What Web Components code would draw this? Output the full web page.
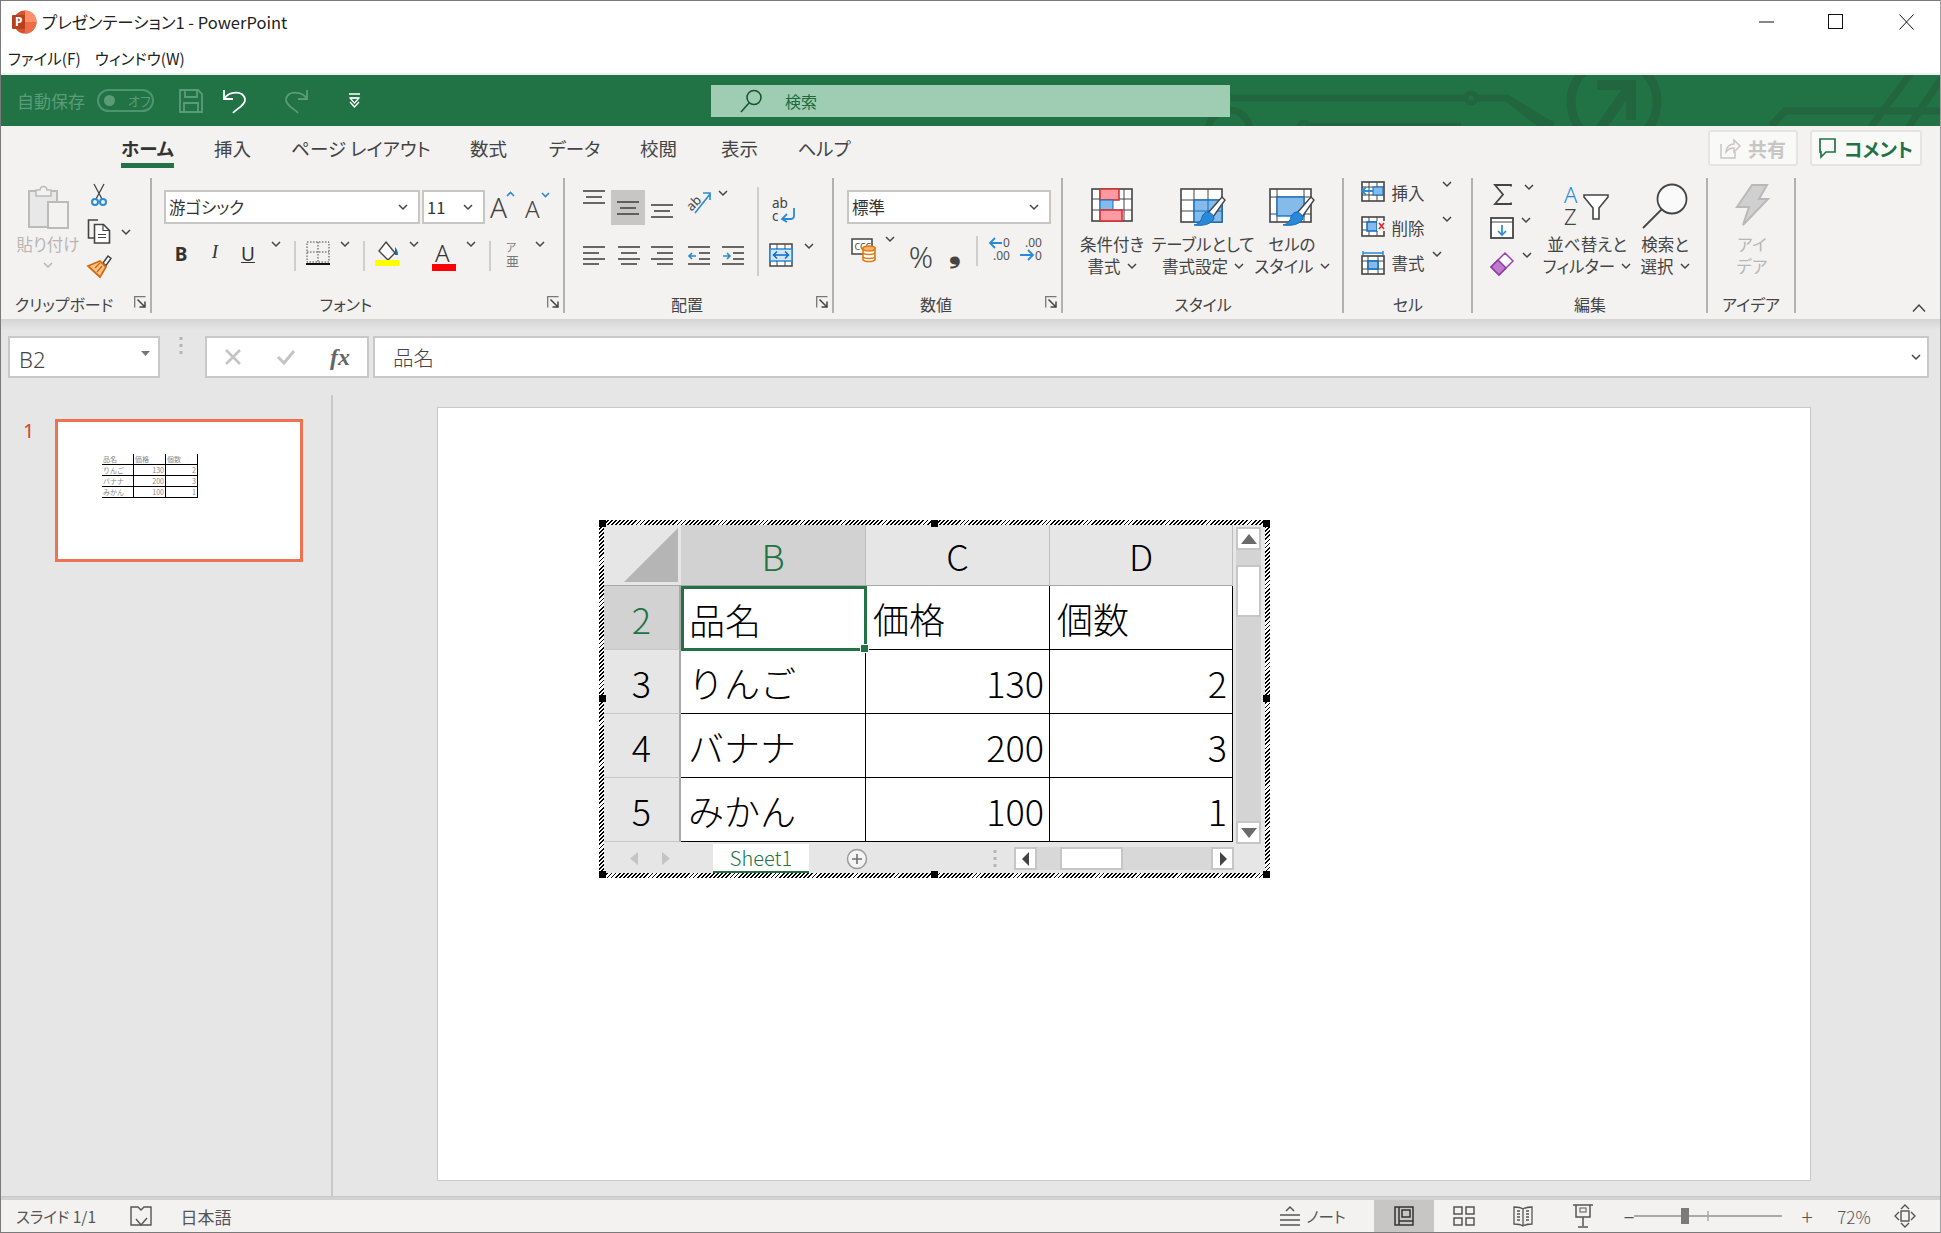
<!DOCTYPE html>
<html lang="ja"><head><meta charset="utf-8"><title>PowerPoint</title>
<style>
html,body{margin:0;padding:0;width:1941px;height:1233px;overflow:hidden;background:#e6e6e6}
</style></head>
<body>
<pp-app>
  <pp-titlebar>プレゼンテーション1 - PowerPoint</pp-titlebar>
  <pp-menubar><span>ファイル(F)</span><span>ウィンドウ(W)</span></pp-menubar>
  <pp-qat></pp-qat>
  <pp-ribbon></pp-ribbon>
  <pp-formula></pp-formula>
  <pp-main></pp-main>
  <pp-status></pp-status>
</pp-app>
<script>
const K='#444',BL='#2b8ad6',MB='#85bbea',DB='#0f6cbd',F='font-family="Noto Sans"';
const gridLines=(x0,y0,x1,y1,xs,ys,c=K)=>`<rect x="${x0}" y="${y0}" width="${x1-x0}" height="${y1-y0}" fill="#fff" stroke="${c}" stroke-width="1.6"/>`+xs.map(x=>`<path d="M${x} ${y0}V${y1}" stroke="${c}" stroke-width="1"/>`).join('')+ys.map(y=>`<path d="M${x0} ${y}H${x1}" stroke="${c}" stroke-width="1"/>`).join('');
const brush=`<path d="M42 9l3 3-12 17-5-4z" fill="#fff" stroke="#444" stroke-width="1.4"/><path d="M28 24c4 1 6 4 6 7-4 6-12 7-20 6 5-1 7-4 8-8 1-3 3-5 6-5z" fill="#2b88d8" stroke="#0f6cbd" stroke-width="1"/>`;
const lines=(arr,c=K)=>arr.map(([x,y,w])=>`<path d="M${x} ${y}h${w}" stroke="${c}" stroke-width="1.6"/>`).join('');
const ICONS={
 chev:[10,6,`<path d="M1 1l4 4 4-4" fill="none" stroke="#444" stroke-width="1.5"/>`],
 chevg:[10,6,`<path d="M1 1l4 4 4-4" fill="none" stroke="#b5b3b1" stroke-width="1.5"/>`],
 launch:[12,12,`<path d="M.7 11.5V.7H11.5" fill="none" stroke="#777" stroke-width="1.3"/><path d="M3.5 3.5l7.5 7.5M11 5.5V11H5.5" fill="none" stroke="#444" stroke-width="1.5"/>`],
 paste:[41,45,`<rect x="1" y="7" width="28" height="36" fill="#e8e8e8" stroke="#bdbbb9" stroke-width="2"/><path d="M8 12V6h4a3.5 3.5 0 0 1 7 0h4v6z" fill="#f3f2f1" stroke="#bdbbb9" stroke-width="1.6"/><rect x="20" y="18" width="20" height="26" fill="#f3f2f1" stroke="#bdbbb9" stroke-width="2"/>`],
 cut:[16,23,`<path d="M3 1l8 15M13 1L5 16" stroke="#444" stroke-width="1.3" fill="none"/><circle cx="4" cy="19" r="3" fill="none" stroke="${BL}" stroke-width="2"/><circle cx="12" cy="19" r="3" fill="none" stroke="${BL}" stroke-width="2"/>`],
 copy:[24,25,`<path d="M11 1H1.5V19H7" fill="none" stroke="#444" stroke-width="1.6"/><path d="M7.5 5.5h9l6 6v12.5h-15z" fill="#fff" stroke="#444" stroke-width="1.6"/><path d="M16 5.5v6h6.5M11 15.5h8M11 18.5h8" fill="none" stroke="#444" stroke-width="1.2"/>`],
 fmtp:[24,23,`<path d="M16 8l5-7 3 2.500-5 7z" fill="#fff" stroke="#444" stroke-width="1.5"/><path d="M1 11l12-5 6 6-6 10z" fill="#f9c48f" stroke="#d86a0c" stroke-width="1.8"/><path d="M8 13l5-5M10 17l5-6" stroke="#d86a0c" stroke-width="1.4"/>`],
 agrow:[24,30,`<text x="0" y="28" font-size="28" font-weight="300" fill="#444" ${F}>A</text><path d="M17 6l3.500-3.500L24 6" fill="none" stroke="${BL}" stroke-width="1.6"/>`],
 ashrink:[24,30,`<text x="0" y="28" font-size="24" font-weight="300" fill="#444" ${F}>A</text><path d="M17 3l3.500 3.500L24 3" fill="none" stroke="${BL}" stroke-width="1.6"/>`],
 border:[24,24,`<rect x="1" y="1" width="22" height="20" fill="none" stroke="#444" stroke-dasharray="1.5 1.5"/><path d="M12 1v20M1 11h22" stroke="#444" stroke-dasharray="1.5 1.5"/><path d="M0 23h24" stroke="#111" stroke-width="2"/>`],
 bucket:[25,25,`<path d="M10 1l9 11-7 7-9-9z" fill="#fff" stroke="#444" stroke-width="1.4" transform="translate(1 0)"/><path d="M20 6c2 2 3 5 3 8h-3z" fill="${DB}"/><rect y="19" width="24" height="6" fill="#ff0"/>`],
 fcolor:[25,30,`<text x="3" y="21" font-size="24" font-weight="300" fill="#333" ${F}>A</text><rect y="23" width="24" height="7" fill="#f00"/>`],
 phon:[15,26,`<text x="0" y="11" font-size="11" fill="#777" font-family="Noto Sans CJK JP">ア</text><text x="0" y="25" font-size="13" fill="#777" font-family="Noto Sans CJK JP">亜</text>`],
 at:[22,14,lines([[0,1,22],[3,7,16],[0,13,22]])],
 am:[22,14,lines([[0,1,22],[3,7,16],[0,13,22]])],
 ab:[22,14,lines([[0,1,22],[3,7,16],[0,13,22]])],
 al:[22,19,lines([[0,1,22],[0,7,16],[0,13,22],[0,18,16]].slice(0,4))],
 ac:[22,19,lines([[0,1,22],[3,7,16],[0,13,22],[3,18,16]])],
 ar:[22,19,lines([[0,1,22],[6,7,16],[0,13,22],[6,18,16]])],
 indl:[22,19,lines([[0,1,22],[11,7,11],[11,13,11],[0,18,22]])+`<path d="M8 10H1M4 7l-3 3 3 3" fill="none" stroke="${BL}" stroke-width="1.6"/>`],
 indr:[22,19,lines([[0,1,22],[11,7,11],[11,13,11],[0,18,22]])+`<path d="M1 10h7M5 7l3 3-3 3" fill="none" stroke="${BL}" stroke-width="1.6"/>`],
 orient:[26,24,`<text x="0" y="17" font-size="13" fill="#444" transform="rotate(-45 8 14)" ${F}>ab</text><path d="M8 23L23 4M16 3h7v7" fill="none" stroke="${BL}" stroke-width="1.6"/>`],
 wrap:[24,26,`<text x="0" y="12" font-size="13.500" fill="#444" ${F}>ab</text><text x="0" y="25" font-size="13.500" fill="#444" ${F}>c</text><path d="M22 12v8c0 2-2 3-3 3h-8M15 18l-5 5 5 3" fill="none" stroke="${BL}" stroke-width="1.8"/>`],
 merge:[24,24,`<rect x="1" y="1" width="22" height="22" fill="#fff" stroke="#444" stroke-width="1.5"/><rect x="1" y="6" width="22" height="12" fill="#d2e6f8" stroke="${BL}" stroke-width="1.5"/><path d="M4 12h16M8 8.500L4.500 12 8 15.500M16 8.500l3.500 3.500L16 15.500" fill="none" stroke="${DB}" stroke-width="1.5"/><path d="M8 1v5M16 1v5M8 18v5M16 18v5" stroke="#444"/>`],
 cur:[24,26,`<rect x="1" y="3" width="20" height="15" fill="#fff" stroke="#444" stroke-width="1.5"/><text x="3.500" y="14" font-size="9" fill="#444" ${F}>CCC</text><path d="M12 12h12v12c-2 2-10 2-12 0z" fill="#fff" stroke="#e07a10" stroke-width="1.600"/><ellipse cx="18" cy="12.500" rx="6" ry="2.500" fill="#f7b267" stroke="#e07a10" stroke-width="1.400"/><path d="M12 17c2 2 10 2 12 0M12 21c2 2 10 2 12 0" fill="none" stroke="#e07a10" stroke-width="1.400"/>`],
 incd:[24,26,`<path d="M14 7H2M7 2L2 7l5 5" fill="none" stroke="${BL}" stroke-width="1.800"/><text x="15" y="11" font-size="12" fill="#555" ${F}>0</text><text x="5" y="24" font-size="12" fill="#555" ${F}>.00</text>`],
 decd:[24,26,`<text x="5" y="11" font-size="12" fill="#555" ${F}>.00</text><path d="M0 19h13M8 14l5 5-5 5" fill="none" stroke="${BL}" stroke-width="1.800"/><text x="15" y="24" font-size="12" fill="#555" ${F}>0</text>`],
 cond:[42,34,gridLines(1,1,41,33,[9,21,33],[11,22])+`<rect x="9" y="1" width="19" height="11" fill="#ff9aa2" stroke="#d13438" stroke-width="1.600"/><rect x="9" y="12" width="13" height="10" fill="${MB}" stroke="${DB}" stroke-width="1"/><rect x="9" y="22" width="22" height="11" fill="#ff9aa2" stroke="#d13438" stroke-width="1.600"/>`],
 tbl:[46,38,gridLines(1,1,42,34,[14,28],[12,23])+`<rect x="14" y="12" width="28" height="22" fill="${MB}" stroke="${DB}" stroke-width="1.300"/><path d="M28 12v22M14 23h28" stroke="${DB}"/>`+brush],
 cst:[46,38,gridLines(1,1,42,34,[8,35],[9,26])+`<rect x="8" y="9" width="27" height="19" fill="${MB}" stroke="${DB}" stroke-width="1.300"/>`+brush],
 ins:[24,21,gridLines(1,1,23,20,[8,16],[6,14])+`<rect x="12" y="6" width="10" height="8" fill="${MB}" stroke="${DB}"/><path d="M12 10H1M5 6l-4 4 4 4" fill="none" stroke="${BL}" stroke-width="1.800"/>`],
 del:[24,21,gridLines(1,1,23,20,[8,16],[6,14])+`<rect x="6" y="6" width="10" height="9" fill="${MB}" stroke="${DB}" stroke-width="1.500"/><rect x="16" y="5" width="8" height="10" fill="#f3f2f1"/><path d="M18 7l5 6M23 7l-5 6" stroke="#e8262a" stroke-width="1.600"/>`],
 fmt:[24,24,gridLines(1,5,23,23,[7,17],[10,18])+`<rect x="7" y="10" width="10" height="8" fill="${MB}" stroke="${DB}" stroke-width="1.500"/><path d="M2 2h20M2 0v4M22 0v4" stroke="${BL}" stroke-width="1.500"/>`],
 sigma:[19,21,`<path d="M18 2.500V1H2l8 9.500L2 20h16v-1.500" fill="none" stroke="#444" stroke-width="1.800"/>`],
 fillb:[24,22,`<rect x="1" y="1" width="22" height="20" fill="#fff" stroke="#444" stroke-width="1.800"/><path d="M1 5h22" stroke="#444"/><path d="M12 8v10M8 14l4 4 4-4" fill="none" stroke="${BL}" stroke-width="1.700"/>`],
 eraser:[24,24,`<path d="M1 15L15 1l8 8L9 23z" fill="#fff" stroke="#a23fb5" stroke-width="1.500"/><path d="M1 15l7-7 8 8-7 7z" fill="#c07acb" stroke="#8e3aa6" stroke-width="1.500"/>`],
 sort:[46,42,`<text x="0" y="19" font-size="22" fill="${BL}" font-weight="300" ${F}>A</text><text x="0" y="41" font-size="22" fill="#444" font-weight="300" ${F}>Z</text><path d="M20 11h24v2L35 24v11h-6V24L20 13z" fill="#fff" stroke="#444" stroke-width="1.600"/>`],
 find:[46,46,`<circle cx="30" cy="16" r="14.500" fill="#fafafa" stroke="#444" stroke-width="1.800"/><path d="M20 26L1 45" stroke="#444" stroke-width="1.800"/>`],
 bolt:[34,42,`<path d="M17 1h15l-8 14h9L8 41l6-18H2z" fill="#d0d0d0" stroke="#b9b9b9" stroke-width="2"/>`],
 caret:[14,8,`<path d="M1 7.500L7 1l6 6.500" fill="none" stroke="#444" stroke-width="1.500"/>`],
 min:[15,2,`<path d="M0 1h15" stroke="#111" stroke-width="1"/>`],
 max:[15,15,`<rect x=".5" y=".5" width="14" height="14" fill="none" stroke="#111"/>`],
 close:[15,16,`<path d="M.5.5l14 15M14.500.5L.5 15.500" stroke="#111"/>`],
 logo:[25,24,`<circle cx="13" cy="12" r="11.500" fill="#d35230"/><path d="M13 .5a11.500 11.500 0 0 1 11.500 11.500H13z" fill="#ff8f6b"/><path d="M13 12h11.500A11.500 11.500 0 0 1 13 23.500z" fill="#ed6c47"/><rect y="5" width="13" height="14" rx="1" fill="#b7401f"/><text x="3" y="16" font-size="12" font-weight="700" fill="#fff" ${F}>P</text>`],
 save:[24,24,`<path d="M1 1h18l4 4v18H1z" fill="none" stroke="#5b9c78" stroke-width="1.800"/><path d="M6 1v7h12V1M5 23v-9h14v9" fill="none" stroke="#5b9c78" stroke-width="1.800"/>`],
 undo:[24,26,`<path d="M1 2v9h9M1 11C6 3 20 2 22 11c1 6-9 10-12 14" fill="none" stroke="#fff" stroke-width="1.800"/>`],
 redo:[24,26,`<path d="M23 2v9h-9M23 11C18 3 4 2 2 11c-1 6 9 10 12 14" fill="none" stroke="#5b9c78" stroke-width="1.800"/>`],
 cust:[11,15,`<path d="M0 1h11M1 5h9M1 9l4.500 5L10 9" fill="none" stroke="#fff" stroke-width="1.500"/><path d="M1 5h9L5.500 10z" fill="none" stroke="#fff" stroke-width="1.200"/>`],
 srch:[22,24,`<circle cx="14" cy="8.500" r="7" fill="none" stroke="#14532f" stroke-width="1.500"/><path d="M9 14L1 23" stroke="#14532f" stroke-width="1.500"/>`],
 share:[20,22,`<path d="M1 7v14h14v-6" fill="none" stroke="#c8c6c4" stroke-width="1.500"/><path d="M6 15c0-5 4-8 8-8V3l6 6-6 6v-4c-3 0-6 1-8 4z" fill="none" stroke="#c8c6c4" stroke-width="1.500"/>`],
 cmt:[17,20,`<path d="M1 1h15v13H7l-5 5v-5H1z" fill="none" stroke="#217346" stroke-width="1.700"/>`],
 x:[18,18,`<path d="M2 2l14 14M16 2L2 16" stroke="#c4c4c4" stroke-width="2.600"/>`],
 ok:[20,16,`<path d="M2 8l6 6L18 2" fill="none" stroke="#c4c4c4" stroke-width="3"/>`],
 tri:[9,5,`<path d="M0 0h9L4.500 5z" fill="#777"/>`],
 book:[22,20,`<path d="M1 1h7l3 3 3-3h7v18h-7l-3 0-3 0H1z" fill="none" stroke="#555" stroke-width="1.400"/><path d="M6 13l5 6 6-7" fill="#f3f2f1" stroke="#555" stroke-width="1.400"/>`],
 note:[22,22,`<path d="M7 6l4-4 4 4M1 10h20M1 15h20M1 20h20" fill="none" stroke="#555" stroke-width="1.500"/>`],
 vnorm:[20,20,`<rect x="1" y="1" width="18" height="18" fill="none" stroke="#333" stroke-width="1.500"/><path d="M5 1v18M5 15h14" stroke="#333" stroke-width="1.500"/><rect x="8" y="4" width="8" height="7" fill="none" stroke="#333" stroke-width="1.500"/>`],
 vgrid:[22,20,`<rect x="1" y="1" width="8" height="7" fill="none" stroke="#555" stroke-width="1.500"/><rect x="13" y="1" width="8" height="7" fill="none" stroke="#555" stroke-width="1.500"/><rect x="1" y="12" width="8" height="7" fill="none" stroke="#555" stroke-width="1.500"/><rect x="13" y="12" width="8" height="7" fill="none" stroke="#555" stroke-width="1.500"/>`],
 vread:[20,22,`<path d="M10 4C7 2 4 2 1 2v17c3 0 6 0 9 2 3-2 6-2 9-2V2c-3 0-6 0-9 2zM10 4v17M4 6h3M4 9h3M4 12h3M4 15h3M13 6h3M13 9h3M13 12h3M13 15h3" fill="none" stroke="#555" stroke-width="1.300"/>`],
 vshow:[20,24,`<path d="M0 1h20M3 1v12h14V1M10 13v9M5 23h10" fill="none" stroke="#555" stroke-width="1.500"/><rect x="7" y="4" width="6" height="4" fill="none" stroke="#555"/>`],
 slider:[170,18,`<path d="M0 9H148" stroke="#aaa" stroke-width="2"/><rect x="47" y="1" width="8" height="16" fill="#7a7a7a"/><path d="M74 4v10" stroke="#aaa" stroke-width="1.500"/>`],
 fit:[24,24,`<path d="M6 8l-4 4 4 4M18 8l4 4-4 4M8 5l4-4 4 4M8 19l4 4 4-4" fill="none" stroke="#555" stroke-width="1.400"/><rect x="8" y="7" width="8" height="10" fill="none" stroke="#555" stroke-width="1.400"/>`],
 plusc:[22,22,`<circle cx="11" cy="11" r="9.500" fill="#f4f4f4" stroke="#9a9a9a" stroke-width="1.500"/><path d="M11 6v10M6 11h10" stroke="#707070" stroke-width="1.600"/>`],
 dots:[4,20,`<path d="M2 1v3M2 8v3M2 15v3" stroke="#b5b5b5" stroke-width="3"/>`],
 la:[8,13,`<path d="M8 0v13L0 6.500z" fill="#c4c4c4"/>`],
 ra:[8,13,`<path d="M0 0v13l8-6.500z" fill="#c4c4c4"/>`],
 ladk:[8,14,`<path d="M7 0v14L0 7z" fill="#444"/>`],
 radk:[8,14,`<path d="M1 0v14l7-7z" fill="#444"/>`],
 uat:[16,10,`<path d="M0 10L8 0l8 10z" fill="#6a6a6a"/>`],
 dat:[16,10,`<path d="M0 0l8 10 8-10z" fill="#6a6a6a"/>`],
};
const def=(name,css,html,proto={})=>{customElements.define(name,class extends HTMLElement{
  constructor(){super();this.attachShadow({mode:'open'}).innerHTML=`<style>${css}</style>${typeof html==='function'?html():html}`}
  connectedCallback(){proto.connected&&proto.connected.call(this)}
})};
const ic=n=>`<pp-ico n="${n}"></pp-ico>`;
const t=(s,st='')=>`<span style="${st}">${s}</span>`;
const H=(x0,items)=>{let p=x0,s='';for(const[x,w,h]of items){s+=`<rb-box style="margin-left:${x-p}px;width:${w}px">${h}</rb-box>`;p=x+w}return`<rb-h>${s}</rb-h>`};
const V=(y0,items)=>{let p=y0,s='';for(const[y,h,c]of items){s+=`<rb-box style="margin-top:${y-p}px;height:${h}px">${c}</rb-box>`;p=y+h}return`<rb-v>${s}</rb-v>`};

def('pp-ico',':host{display:block;flex:none;line-height:0}svg{display:block;overflow:visible}','',{connected(){
  const [w,h,b]=ICONS[this.getAttribute('n')];
  this.shadowRoot.innerHTML=`<style>:host{display:block;flex:none;line-height:0}svg{display:block;overflow:visible}</style><svg xmlns="http://www.w3.org/2000/svg" width="${w}" height="${h}" viewBox="0 0 ${w} ${h}">${b}</svg>`;
}});
def('rb-box',':host{display:flex;justify-content:center;align-items:center;flex:none;white-space:nowrap}','<slot></slot>');
def('rb-h',':host{display:flex;align-items:flex-start;width:100%}','<slot></slot>');
def('rb-v',':host{display:flex;flex-direction:column;width:100%}','<slot></slot>');
def('rb-sep',':host{display:block;width:2px;height:30px;background:#d0cecc}','');
def('pp-app',`:host{display:flex;flex-direction:column;width:1941px;height:1233px;box-sizing:border-box;border:1px solid #7a7a7a;border-right-color:#a0a0a0;background:#e6e6e6;overflow:hidden;
  font-family:"Noto Sans CJK JP","Noto Sans",sans-serif;font-feature-settings:"palt" 1;color:#444}`,'<slot></slot>');
def('pp-titlebar',`:host{display:flex;align-items:center;height:41px;background:#fff;color:#222;font-size:16.500px;flex:none}
  .logo{margin-left:11px;margin-right:5px}.txt{flex:1}.b{display:flex;margin-right:26px;align-items:center}.b pp-ico:nth-child(2){margin-left:54px}.b pp-ico:nth-child(3){margin-left:56px}`,
  `<pp-ico class="logo" n="logo"></pp-ico><div class="txt"><slot></slot></div><div class="b"><pp-ico n="min"></pp-ico><pp-ico n="max"></pp-ico><pp-ico n="close"></pp-ico></div>`);
def('pp-menubar',`:host{display:flex;align-items:center;gap:14px;height:31px;padding-left:7px;background:#fff;color:#222;font-size:15.500px;border-bottom:2px solid #f0f0f0;flex:none}`,'<slot></slot>');
def('pp-qat',`:host{display:block;height:51px;background:#217346;position:relative;flex:none;overflow:hidden}
  .bg{position:absolute;left:0;top:0}.fg{position:relative}
  .s{width:100%;height:32px;background:#9fcdb3;display:flex;align-items:center;color:#1c6b40;font-size:16px}
  .pill{width:57px;height:23px;box-sizing:border-box;border:2px solid #4f9470;border-radius:12px;display:flex;align-items:center;color:#5b9c78;font-size:13px}
  .pill i{width:11px;height:11px;border-radius:50%;background:#5b9c78;margin:0 13px 0 5px}
  rb-h{height:51px;align-items:center}`,
  ()=>`<svg class="bg" width="1941" height="51" fill="none" stroke="#22663f" stroke-width="7"><path d="M1230 23H1464M1476 23h30l46 28M1506 23L1556 62"/><circle cx="1470" cy="23" r="5" stroke-width="5"/><circle cx="1613" cy="27" r="43" stroke-width="9"/><path d="M1596 10h34V45M1630 10L1599 54" stroke-width="10"/><path d="M1770 51l14-15H1941M1910-2L1867 56M1943 0L1905 56"/><circle cx="1228" cy="56" r="21"/><circle cx="1303" cy="52" r="5" stroke-width="5"/><path d="M1309 51H1460"/></svg>
   <div class="fg">${H(1,[
     [16,70,t('自動保存','color:#5b9c78;font-size:17px')],
     [97,57,`<div class="pill"><i></i>オフ</div>`],
     [179,24,ic('save')],[223,24,ic('undo')],[255,10,ic('chevw')],[284,24,ic('redo')],[315,10,ic('chevd')],[349,11,ic('cust')],
     [711,519,`<div class="s"><pp-ico n="srch" style="margin-left:29px;margin-right:23px"></pp-ico>検索</div>`]])}</div>`);
ICONS.chevw=[10,6,`<path d="M1 1l4 4 4-4" fill="none" stroke="#fff" stroke-width="1.500"/>`];
ICONS.chevd=[10,6,`<path d="M1 1l4 4 4-4" fill="none" stroke="#5b9c78" stroke-width="1.500"/>`];
def('pp-tab',`:host{display:block;height:42px;box-sizing:border-box;padding-top:7px;font-size:18.500px;line-height:30px;color:#444;text-align:center;white-space:nowrap}
  :host([selected]){font-weight:700;color:#333;border-bottom:5px solid #217346}`,'<slot></slot>');
def('pp-combo',`:host{display:flex;align-items:center;box-sizing:border-box;width:100%;height:34px;background:#fff;border:2px solid #c8c6c4;padding:0 10px 0 3px;font-size:16.500px;color:#333;justify-content:space-between}`,`<span><slot></slot></span><pp-ico n="chev"></pp-ico>`);
def('pp-share',`:host{display:flex;align-items:center;justify-content:center;gap:8px;box-sizing:border-box;width:100%;height:36px;background:#f9f9f8;border:2px solid #e6e4e2;border-radius:3px;font-size:19px;font-weight:700}`,'<slot></slot>');
def('rb-group',`:host{display:flex;flex-direction:column;flex:none;height:135px;box-sizing:border-box;border-right:2px solid #b3b1af}
  .c{height:118px}.l{height:17px;font-size:16px;line-height:17px;color:#444;white-space:nowrap;margin-top:2px}`,
  `<div class="c"><slot></slot></div><div class="l"><slot name="label"></slot></div>`);
const ribbonHtml=()=>{
  const L=(x0,cx,s,launch)=>`<div slot="label">${H(x0,launch?[[cx-60,120,s],[launch,12,ic('launch')]]:[[cx-60,120,s]])}</div>`;
  const G=(x0,x1,label,html)=>`<rb-group style="width:${x1-x0}px">${html}${label}</rb-group>`;
  const g2=s=>t(s,'color:#b8b6b4');
  const tx=s=>t(s,'font-size:16.500px');
  const big=(x0,ico,y,h,l1,l2)=>V(178,[[y,h,ic(ico)],[233,22,tx(l1)],[255,22,l2]]);
  const wch=(s,g=6)=>`<span style="display:flex;align-items:center;gap:${g}px;font-size:16.500px">${s}${ic('chev')}</span>`;
  const cols=[
   G(1,152,L(1,64,'クリップボード',134),H(1,[
     [17,62,V(178,[[184,45,ic('paste')],[233,22,t('貼り付け','color:#b8b6b4;font-size:16.500px')],[262,6,ic('chevg')]])],
     [87,24,V(178,[[183,23,ic('cut')],[219,25,ic('copy')],[255,23,ic('fmtp')]])],
     [121,10,V(178,[[229,6,ic('chev')]])]])),
   G(152,565,L(152,346,'フォント',547),V(178,[
     [190,34,H(152,[[164,256,'<pp-combo>游ゴシック</pp-combo>'],[422,63,'<pp-combo>11</pp-combo>'],[490,24,ic('agrow')],[525,24,ic('ashrink')]])],
     [239,34,H(152,[[174,14,t('B','font:700 19px Noto Sans;color:#333')],[208,14,t('I','font:italic 400 19px Liberation Serif;color:#333')],[240,16,t('U','font:400 19px Noto Sans;color:#333;text-decoration:underline')],[271,10,ic('chev')],[294,2,'<rb-sep></rb-sep>'],[306,24,ic('border')],[340,10,ic('chev')],[363,2,'<rb-sep></rb-sep>'],[375,25,ic('bucket')],[409,10,ic('chev')],[432,25,ic('fcolor')],[466,10,ic('chev')],[489,2,'<rb-sep></rb-sep>'],[506,15,ic('phon')],[535,10,ic('chev')]])]])),
   G(565,834,L(565,687,'配置',816),H(565,[
     [576,176,V(178,[[190,35,H(576,[[583,22,ic('at')],[611,34,`<rb-box style="background:#c8c6c4;height:35px;width:34px">${ic('am')}</rb-box>`],[651,22,`<rb-box style="padding-top:14px">${ic('ab')}</rb-box>`],[687,26,ic('orient')],[718,10,ic('chev')]])],
       [245,20,H(576,[[583,22,ic('al')],[618,22,ic('ac')],[651,22,ic('ar')],[688,22,ic('indl')],[722,22,ic('indr')]])]])],
     [757,2,V(178,[[187,89,'<rb-sep style="height:89px"></rb-sep>']])],
     [769,48,V(178,[[196,26,H(769,[[772,24,ic('wrap')]])],[243,24,H(769,[[769,24,ic('merge')],[804,10,ic('chev')]])]])]])),
   G(834,1063,L(834,936,'数値',1045),V(178,[
     [190,34,H(834,[[847,204,'<pp-combo>標準</pp-combo>']])],
     [239,34,H(834,[[851,24,ic('cur')],[885,10,ic('chev')],[908,26,t('%','font:300 30px Noto Sans;color:#444')],[948,14,t('❟','font:700 30px Liberation Serif;color:#444')],[976,2,'<rb-sep></rb-sep>'],[988,24,ic('incd')],[1020,24,ic('decd')]])]])),
   G(1063,1344,L(1063,1203,'スタイル'),H(1063,[
     [1073,78,big(0,'cond',188,34,'条件付き',wch('書式'))],
     [1151,104,big(0,'tbl',188,38,'テーブルとして',wch('書式設定'))],
     [1253,78,big(0,'cst',188,38,'セルの',wch('スタイル'))]])),
   G(1344,1473,L(1344,1408,'セル'),V(178,[
     [182,22,H(1344,[[1361,24,ic('ins')],[1390,36,tx('挿入')],[1442,10,ic('chev')]])],
     [217,22,H(1344,[[1361,24,ic('del')],[1390,36,tx('削除')],[1442,10,ic('chev')]])],
     [252,22,H(1344,[[1361,24,ic('fmt')],[1390,36,tx('書式')],[1432,10,ic('chev')]])]])),
   G(1473,1708,L(1473,1590,'編集'),H(1473,[
     [1485,50,V(178,[[183,22,H(1485,[[1493,19,ic('sigma')],[1524,10,ic('chev')]])],[217,22,H(1485,[[1490,24,ic('fillb')],[1521,10,ic('chev')]])],[252,24,H(1485,[[1490,24,ic('eraser')],[1522,10,ic('chev')]])]])],
     [1545,84,big(0,'sort',184,42,'並べ替えと',wch('フィルター'))],
     [1632,66,big(0,'find',183,46,'検索と',wch('選択'))]])),
   G(1708,1796,L(1708,1751,'アイデア'),H(1708,[[1710,84,V(178,[[184,42,ic('bolt')],[233,22,t('アイ','color:#b8b6b4;font-size:16.500px')],[255,22,t('デア','color:#b8b6b4;font-size:16.500px')]])]]))
  ];
  return cols.join('');
};
def('pp-ribbon',`:host{display:block;height:193px;background:#f3f2f1;flex:none}
  .tabs{height:42px}.tabs rb-box{height:42px;align-items:flex-start}
  .share{display:flex;align-items:center;gap:8px}
  .gs{display:flex;margin-top:10px}.end{flex:1}`,
  ()=>`<div class="tabs">${H(1,[
     [121,53,'<pp-tab selected>ホーム</pp-tab>'],[213,39,'<pp-tab>挿入</pp-tab>'],[296,130,'<pp-tab>ページ レイアウト</pp-tab>'],[469,39,'<pp-tab>数式</pp-tab>'],[551,47,'<pp-tab>データ</pp-tab>'],[639,39,'<pp-tab>校閲</pp-tab>'],[720,39,'<pp-tab>表示</pp-tab>'],[800,48,'<pp-tab>ヘルプ</pp-tab>'],
     [1708,90,`<pp-share style="color:#c8c6c4;margin-top:4px">${ic('share')}共有</pp-share>`],
     [1810,112,`<pp-share style="color:#217346;margin-top:4px">${ic('cmt')}コメント</pp-share>`]])}</div>
   <div class="gs">${ribbonHtml()}<div class="end">${H(1796,[[1912,14,V(178,[[304,8,ic('caret')]])]])}</div></div>`);
def('pp-fbox',`:host{display:flex;align-items:center;box-sizing:border-box;height:42px;background:#fff;border:2px solid #c8c8c8;width:100%;color:#444}`,'<slot></slot>');
def('pp-formula',`:host{display:block;height:59px;flex:none;padding-top:17px;box-sizing:border-box;background:linear-gradient(#d4d4d4,#e6e6e6 11px)}`,
  ()=>H(1,[
   [8,152,`<pp-fbox style="justify-content:space-between;padding:4px 8px 0 9px;font:300 22px 'Noto Sans'">B2<pp-ico n="tri" style="margin-top:-12px"></pp-ico></pp-fbox>`],
   [179,4,ic('dots')],
   [205,164,`<pp-fbox style="justify-content:space-between;padding:0 17px 0 17px">${ic('x')}${ic('ok')}${t('fx','font:italic 700 24px Liberation Serif;color:#666')}</pp-fbox>`],
   [373,1556,`<pp-fbox style="justify-content:space-between;padding:0 6px 0 18px;font-size:20.500px;font-feature-settings:normal;font-weight:300">品名${ic('chev')}</pp-fbox>`]]));
def('pp-thumb',`:host{display:block;width:248px;height:143px;box-sizing:border-box;border:3px solid #f0714f;background:#fff;padding:32px 0 0 44px}
  .m{display:grid;grid-template-columns:32px 32px 32px;grid-auto-rows:11px;width:96px;font-size:7px;line-height:10px;color:#888;font-feature-settings:normal}
  .m div{border-right:1px solid #000;border-bottom:1px solid #000;box-sizing:border-box;padding:0 1px;white-space:nowrap;overflow:hidden}.r{text-align:right}`,
  `<div class="m"><div>品名</div><div>価格</div><div>個数</div><div>りんご</div><div class="r">130</div><div class="r">2</div><div>バナナ</div><div class="r">200</div><div class="r">3</div><div>みかん</div><div class="r">100</div><div class="r">1</div></div>`);
def('xl-cell',`:host{display:flex;align-items:center;box-sizing:border-box;font-size:36px;font-weight:300;color:#000;background:#fff;border-right:1px solid #000;border-bottom:1px solid #000;padding:0 5px 0 7px;white-space:nowrap;font-feature-settings:normal;position:relative}
  :host([r]){justify-content:flex-end}
  :host([h]){justify-content:center;background:#e6e6e6;border-right:1px solid #bdbdbd;border-bottom:1px solid #a8a8a8;padding:0}
  :host([rh]){justify-content:center;background:#e6e6e6;border-right:2px solid #a8a8a8;border-bottom:1px solid #c8c8c8;padding:0}
  :host([on]){background:#d2d2d2;color:#217346}
  :host([sel]){border:3px solid #217346;margin:0 -1px -1px 0;padding-left:5px;z-index:1}
  :host([sel])::after{content:"";position:absolute;right:-5px;bottom:-5px;width:7px;height:7px;background:#217346;border:1px solid #fff}
  :host([c]){justify-content:flex-end;background:#e6e6e6;align-items:flex-end;padding:0 3px 3px 0;border-right:none;border-bottom:1px solid #a8a8a8}
  .tri{display:none}:host([c]) .tri{display:block;width:0;height:0;border-style:solid;border-width:0 0 54px 54px;border-color:transparent transparent #b5b5b5 transparent}`,
  `<i class="tri"></i><slot></slot>`);
def('xl-btn',`:host{display:flex;align-items:center;justify-content:center;box-sizing:border-box;height:23px;width:100%;background:#fff;border:2px solid #c6c6c6}`,'<slot></slot>');
def('xl-sheet',`:host{display:block;position:relative;width:671px;height:358px;box-sizing:border-box;padding:5px;background:repeating-linear-gradient(135deg,#000 0 1.300px,#fff 1.300px 2.900px)}
  .in{background:#e6e6e6;height:348px}
  .top{display:flex;height:319px}
  .grid{display:grid;grid-template-columns:77px 185px 184px 183px;grid-template-rows:61px 64px 64px 64px 64px;height:317px}
  .sb{width:25px;margin-left:3px;background:#d4d4d4;display:flex;flex-direction:column;margin-top:2px;height:317px}
  .sb .th{height:52px;margin-top:15px;box-sizing:border-box;background:#fff;border:2px solid #c6c6c6}.sp{flex:1}
  .tabs{height:29px}.tabs rb-box{height:29px}
  .tab{display:flex;align-items:center;justify-content:center;width:100%;height:29px;background:#fff;border-bottom:2px solid #217346;box-sizing:border-box;color:#217346;font-size:20px;font-weight:300;margin-top:-1px}
  .track{width:100%;height:23px;background:#d8d8d8;display:flex}.th2{width:63px;height:23px;margin-left:23px;box-sizing:border-box;background:#fff;border:2px solid #c6c6c6}
  .hd{position:absolute;width:7px;height:7px;background:#000}`,
  ()=>`<div class="in"><div class="top"><div class="grid"><slot></slot></div>
    <div class="sb"><xl-btn>${ic('uat')}</xl-btn><div class="th"></div><div class="sp"></div><xl-btn>${ic('dat')}</xl-btn></div></div>
    <div class="tabs">${H(606,[[632,8,ic('la')],[664,8,ic('ra')],[715,96,'<div class="tab">Sheet1</div>'],[848,22,ic('plusc')],[995,4,ic('dots')],[1016,23,`<xl-btn>${ic('ladk')}</xl-btn>`],[1039,174,'<div class="track"><div class="th2"></div></div>'],[1213,23,`<xl-btn>${ic('radk')}</xl-btn>`]])}</div></div>
    ${[[0,0],[332,0],[664,0],[0,175],[664,175],[0,351],[332,351],[664,351]].map(([x,y])=>`<i class="hd" style="left:${x}px;top:${y}px"></i>`).join('')}`);
def('pp-main',`:host{display:flex;height:819px;flex:none;box-sizing:border-box;border-bottom:1px solid #c8c8c8}
  .th{width:332px;height:802px;margin-top:17px;box-sizing:border-box;border-right:2px solid #c8c8c8;display:flex;flex:none}
  .n{color:#d24726;font:400 20px "Noto Sans";margin:22px 0 0 22px;width:32px;line-height:28px}
  pp-thumb{margin-top:24px}
  .pane{flex:1}
  .slide{width:1374px;height:774px;margin:29px 0 0 104px;background:#fff;box-sizing:border-box;border:1px solid #c8c8c8;padding:112px 0 0 161px}`,
  `<div class="th"><div class="n">1</div><pp-thumb></pp-thumb></div>
   <div class="pane"><div class="slide"><xl-sheet>
     <xl-cell c></xl-cell><xl-cell h on>B</xl-cell><xl-cell h>C</xl-cell><xl-cell h>D</xl-cell>
     <xl-cell rh on>2</xl-cell><xl-cell sel>品名</xl-cell><xl-cell>価格</xl-cell><xl-cell>個数</xl-cell>
     <xl-cell rh>3</xl-cell><xl-cell>りんご</xl-cell><xl-cell r>130</xl-cell><xl-cell r>2</xl-cell>
     <xl-cell rh>4</xl-cell><xl-cell>バナナ</xl-cell><xl-cell r>200</xl-cell><xl-cell r>3</xl-cell>
     <xl-cell rh>5</xl-cell><xl-cell>みかん</xl-cell><xl-cell r>100</xl-cell><xl-cell r>1</xl-cell>
   </xl-sheet></div></div>`);
def('pp-status',`:host{display:block;height:35px;box-sizing:border-box;border-top:3px solid #d2d2d2;background:#f3f2f1;flex:1;font-size:15.500px;color:#555}
  rb-h{height:32px;align-items:center}rb-box{height:32px}`,
  ()=>H(1,[
   [13,86,'スライド 1/1'],[130,22,ic('book')],[180,52,t('日本語','font-feature-settings:normal;font-size:17px')],
   [1279,22,ic('note')],[1306,40,'ノート'],
   [1374,60,`<rb-box style="background:#c8c6c4;width:60px">${ic('vnorm')}</rb-box>`],
   [1453,22,ic('vgrid')],[1513,20,ic('vread')],[1573,20,ic('vshow')],
   [1622,14,t('−','font-size:19px')],[1645,148,ic('slider')],[1800,14,t('+','font-size:21px;font-weight:300')],
   [1833,42,t('72%','font-size:17px;font-weight:300')],[1893,24,ic('fit')]]));
</script>
</body></html>
